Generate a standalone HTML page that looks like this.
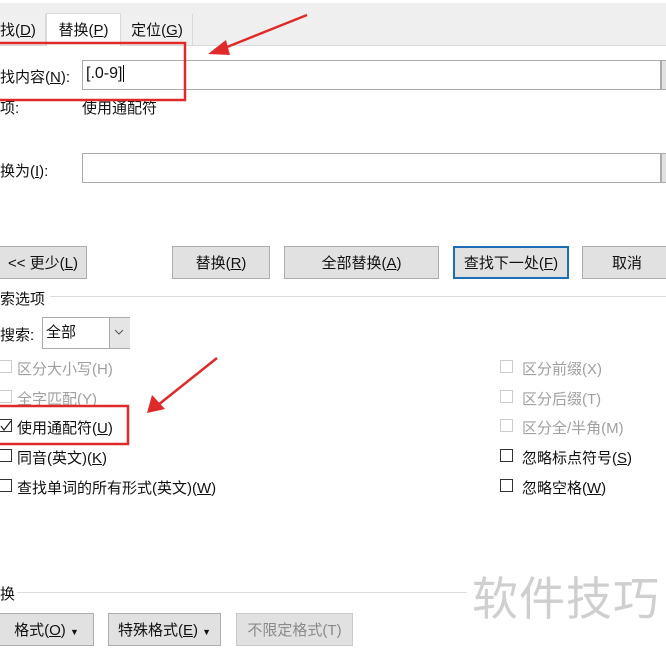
<!DOCTYPE html>
<html><head><meta charset="utf-8"><style>
body{margin:0;width:666px;height:646px;overflow:hidden;background:#fff;position:relative;font-family:"Liberation Sans","Microsoft YaHei","Noto Sans CJK SC",sans-serif;font-size:15px;color:#111}
.a{position:absolute;white-space:nowrap}
.btn{position:absolute;background:#e1e1e1;border:1px solid #adadad;box-sizing:border-box;text-align:center;line-height:31px}
.cb{position:absolute;width:13px;height:13px;border:1px solid #333;box-sizing:border-box;background:#fff}
.dis{color:#a0a0a0}.dis.cb{border-color:#ccc}
u{text-decoration:underline}
</style></head><body>
<div class="a" style="left:0;top:3px;width:666px;height:42px;background:#efefef;border-bottom:1px solid #d9d9d9"></div>
<div class="a" style="left:0;top:14px;width:45px;height:31px;background:#f0f0f0;border-right:1px solid #d9d9d9;line-height:34px">找(<u>D</u>)</div>
<div class="a" style="left:46px;top:13px;width:75px;height:33px;background:#fff;border:1px solid #d9d9d9;border-bottom:none;box-sizing:border-box;line-height:34px;text-align:center">替换(<u>P</u>)</div>
<div class="a" style="left:122px;top:14px;width:70px;height:31px;background:#f0f0f0;border-right:1px solid #d9d9d9;line-height:34px;text-align:center">定位(<u>G</u>)</div>

<div class="a" style="left:0;top:66px">找内容(<u>N</u>):</div>
<div class="a" style="left:82px;top:60px;width:579px;height:30px;border:1px solid #aaa;box-sizing:border-box;padding-left:3px;line-height:26px;font-size:16px">[.0-9]<span style="border-left:1px solid #000;margin-left:1px"></span></div>
<div class="a" style="left:661px;top:60px;width:6px;height:30px;background:#e1e1e1;border:1px solid #aaa;box-sizing:border-box"></div>
<div class="a" style="left:0;top:97px">项:</div>
<div class="a" style="left:82px;top:97px">使用通配符</div>

<div class="a" style="left:0;top:160px">换为(<u>I</u>):</div>
<div class="a" style="left:82px;top:153px;width:579px;height:30px;border:1px solid #aaa;box-sizing:border-box"></div>
<div class="a" style="left:661px;top:153px;width:6px;height:30px;background:#e1e1e1;border:1px solid #aaa;box-sizing:border-box"></div>

<div class="btn" style="left:-1px;top:246px;width:88px;height:33px;line-height:34px">&lt;&lt; 更少(<u>L</u>)</div>
<div class="btn" style="left:172px;top:246px;width:98px;height:33px;line-height:34px">替换(<u>R</u>)</div>
<div class="btn" style="left:284px;top:246px;width:155px;height:33px;line-height:34px">全部替换(<u>A</u>)</div>
<div class="btn" style="left:453px;top:246px;width:116px;height:33px;border:2px solid #1d6fb5;line-height:32px">查找下一处(<u>F</u>)</div>
<div class="btn" style="left:582px;top:246px;width:90px;height:33px;line-height:34px">取消</div>

<div class="a" style="left:0;top:288px">索选项</div>
<div class="a" style="left:50px;top:296px;width:616px;height:1px;background:#ddd"></div>
<div class="a" style="left:0;top:324px">搜索:</div>
<div class="a" style="left:42px;top:317px;width:88px;height:32px;border:1px solid #aaa;box-sizing:border-box;padding-left:3px;line-height:29px">全部</div>
<div class="a" style="left:109px;top:318px;width:20px;height:30px;background:#e5e5e5;border-left:1px solid #aaa"></div>
<svg class="a" style="left:114px;top:329px" width="10" height="6"><polyline points="1,1 5,5 9,1" fill="none" stroke="#555" stroke-width="1"/></svg>

<div class="cb dis" style="left:-1px;top:360px"></div><div class="a dis" style="left:17px;top:358px">区分大小写(H)</div>
<div class="cb dis" style="left:-1px;top:390px"></div><div class="a dis" style="left:17px;top:388px">全字匹配(Y)</div>
<div class="cb" style="left:-1px;top:419px"></div>
<svg class="a" style="left:0;top:420px" width="12" height="12"><polyline points="1,6 4,10 11,1" fill="none" stroke="#222" stroke-width="1.2"/></svg>
<div class="a" style="left:17px;top:417px">使用通配符(<u>U</u>)</div>
<div class="cb" style="left:-1px;top:449px"></div><div class="a" style="left:17px;top:447px">同音(英文)(<u>K</u>)</div>
<div class="cb" style="left:-1px;top:479px"></div><div class="a" style="left:17px;top:477px">查找单词的所有形式(英文)(<u>W</u>)</div>

<div class="cb dis" style="left:500px;top:360px"></div><div class="a dis" style="left:522px;top:358px">区分前缀(X)</div>
<div class="cb dis" style="left:500px;top:390px"></div><div class="a dis" style="left:522px;top:388px">区分后缀(T)</div>
<div class="cb dis" style="left:500px;top:419px"></div><div class="a dis" style="left:522px;top:417px">区分全/半角(M)</div>
<div class="cb" style="left:500px;top:449px"></div><div class="a" style="left:522px;top:447px">忽略标点符号(<u>S</u>)</div>
<div class="cb" style="left:500px;top:479px"></div><div class="a" style="left:522px;top:477px">忽略空格(<u>W</u>)</div>

<div class="a" style="left:0;top:583px">换</div>
<div class="a" style="left:17px;top:592px;width:450px;height:1px;background:#ddd"></div>
<div class="a" style="left:472px;top:563px;font-size:46px;color:#cfcfcf;letter-spacing:1px">软件技巧</div>

<div class="btn" style="left:-1px;top:613px;width:95px;height:33px;line-height:34px">格式(<u>O</u>) <span style="font-size:9px">▼</span></div>
<div class="btn" style="left:108px;top:613px;width:113px;height:33px;line-height:34px">特殊格式(<u>E</u>) <span style="font-size:9px">▼</span></div>
<div class="btn" style="left:236px;top:613px;width:117px;height:33px;line-height:34px;color:#8a8a8a;border-color:#c8c8c8">不限定格式(T)</div>

<svg class="a" style="left:0;top:0" width="666" height="646">
<g fill="none" stroke="#e02a2a" stroke-width="2.5">
<rect x="-3" y="43" width="188" height="57"/>
<rect x="-3" y="406" width="131" height="38"/>
<line x1="307" y1="15" x2="222" y2="49"/>
<line x1="217" y1="358" x2="158" y2="405"/>
</g>
<polygon points="208,54 226,40 230,55" fill="#e02a2a"/>
<polygon points="147,413 152,395 165,409" fill="#e02a2a"/>
</svg>
</body></html>
